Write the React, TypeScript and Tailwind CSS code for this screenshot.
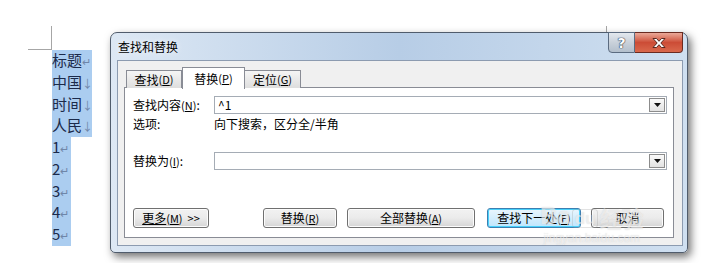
const CJK = "font-['Noto_Sans_CJK_SC','Liberation_Sans',sans-serif]";

const DOC_ROWS = [
  { text: "标题", mark: "↵", w: "w-[40px]" },
  { text: "中国", mark: "↓", w: "w-[40px]" },
  { text: "时间", mark: "↓", w: "w-[40px]" },
  { text: "人民", mark: "↓", w: "w-[40px]" },
  { text: "1", mark: "↵", w: "w-[19px]" },
  { text: "2", mark: "↵", w: "w-[19px]" },
  { text: "3", mark: "↵", w: "w-[19px]" },
  { text: "4", mark: "↵", w: "w-[19px]" },
  { text: "5", mark: "↵", w: "w-[19px]" },
];

function Key({ k }: { k: string }) {
  return (
    <span className="text-[11px]">
      (<span className="underline">{k}</span>)
    </span>
  );
}

function DropArrow() {
  return (
    <div className="w-[16px] h-[14px] border border-[#8c8c8c] bg-gradient-to-b from-[#fafafa] to-[#e2e2e2] flex items-center justify-center">
      <svg width="7" height="4" viewBox="0 0 7 4">
        <path d="M0 0h7L3.5 4z" fill="#111" />
      </svg>
    </div>
  );
}

function Btn({
  w,
  ml,
  primary,
  children,
}: {
  w: string;
  ml?: string;
  primary?: boolean;
  children: React.ReactNode;
}) {
  return (
    <div
      className={`${w} ${ml ?? ""} h-[20px] rounded-[3px] border flex items-center justify-center text-[12px] text-black ${
        primary
          ? "border-[#3c7fb1] bg-gradient-to-b from-[#eaf6fd] to-[#bee6fd] shadow-[inset_0_0_0_1px_#48d1fb]"
          : "border-[#707070] bg-gradient-to-b from-[#f2f2f2] via-[#ebebeb] to-[#d5d5d5] shadow-[inset_0_0_0_1px_#fcfcfc]"
      }`}
    >
      {children}
    </div>
  );
}

export default function App() {
  return (
    <div className={`relative w-[704px] h-[263px] bg-white overflow-hidden ${CJK}`}>
      {/* crop marks */}
      <div className="flex pt-[26px]">
        <div className="ml-[28px] w-[24px] h-[24px] border-r border-b border-[#a6a6a6]" />
        <div className="ml-[554px] w-px h-[24px] bg-[#a6a6a6]" />
      </div>

      {/* document text */}
      <div className="pl-[52px] text-[15px] leading-[20.75px] text-[#1b2a4a]">
        {DOC_ROWS.map((r, i) => (
          <div key={i} className={`${r.w} bg-[#abcdf0] whitespace-nowrap`}>
            {r.text}
            <span className="text-[11px] text-[#6f86a8]">{r.mark}</span>
          </div>
        ))}
      </div>

      {/* dialog window */}
      <div className="absolute left-[110px] top-[32px] w-[578px] h-[221px] rounded-t-[7px] rounded-b-[5px] border border-[#505c6c] bg-gradient-to-r from-[#dde8f4] via-[#b7cde6] to-[#cfdff0] shadow-[3px_4px_9px_rgba(0,0,0,0.55)] flex flex-col">
        <div className="h-[27px] flex justify-between">
          <div className="pl-[7px] pt-[5px] text-[12px] text-black [text-shadow:0_0_6px_#fff]">
            查找和替换
          </div>
          <div className="flex -mt-px mr-[4px] h-[21px]">
            <div className="w-[27px] border border-[#5b6b80] rounded-bl-[4px] bg-gradient-to-b from-[#e3e8ee] via-[#c9d1da] to-[#b3bfcc] flex items-center justify-center">
              <span className="text-[14px] font-bold leading-none text-white font-['DejaVu_Sans',sans-serif] [text-shadow:0_0_1px_#2b3a4e,0_0_1px_#2b3a4e,0_0_1px_#2b3a4e]">
                ?
              </span>
            </div>
            <div className="w-[48px] border border-l-0 border-[#6a2a20] rounded-br-[4px] bg-gradient-to-b from-[#e9a898] via-[#cc4c36] to-[#d9684c] flex items-center justify-center">
              <svg width="16" height="12" viewBox="0 0 16 12">
                <path
                  d="M2 1.5h3.5L8 4.3 10.5 1.5H14l-4.2 4.5L14 10.5h-3.5L8 7.7 5.5 10.5H2l4.2-4.5z"
                  fill="#fff"
                  stroke="#4a1c14"
                  strokeWidth="0.9"
                  strokeLinejoin="round"
                />
              </svg>
            </div>
          </div>
        </div>

        <div className="flex-1 ml-[6px] mr-[4px] mb-[6px] border border-[#8c9bb0] bg-[#f0f0f0] pl-[6px] pr-[8px] pt-[6px] pb-[7px] flex flex-col">
          {/* tabs */}
          <div className="flex items-end h-[21px] pl-[2px] -mb-px relative z-10 text-[12px] text-black">
            <div className="w-[56px] h-[18px] border border-b-0 border-[#898c95] bg-gradient-to-b from-[#f5f5f5] to-[#dedede] flex items-center justify-center">
              查找<Key k="D" />
            </div>
            <div className="w-[63px] h-[22px] border border-b-0 border-[#898c95] bg-white flex items-center justify-center -mb-px">
              替换<Key k="P" />
            </div>
            <div className="w-[56px] h-[18px] border border-b-0 border-l-0 border-[#898c95] bg-gradient-to-b from-[#f5f5f5] to-[#dedede] flex items-center justify-center">
              定位<Key k="G" />
            </div>
          </div>

          {/* panel */}
          <div className="flex-1 border border-[#898c95] bg-white pl-[8px] pr-[6px] pt-[8px] text-[12px] text-black flex flex-col">
            <div className="flex items-center">
              <div className="w-[81px] whitespace-nowrap">
                查找内容<Key k="N" />:
              </div>
              <div className="flex-1 h-[18px] border border-[#a5acb5] bg-white flex items-center justify-between pr-px">
                <span className="pl-[3px] text-[12px] leading-none">^1</span>
                <DropArrow />
              </div>
            </div>
            <div className="flex h-[14px] mt-[3px] leading-[14px]">
              <div className="w-[81px]">选项:</div>
              <div>向下搜索，区分全/半角</div>
            </div>
            <div className="flex items-center mt-[21px]">
              <div className="w-[81px] whitespace-nowrap">
                替换为<Key k="I" />:
              </div>
              <div className="flex-1 h-[18px] border border-[#a5acb5] bg-white flex items-center justify-end pr-px">
                <DropArrow />
              </div>
            </div>
            <div className="flex mt-[38px]">
              <Btn w="w-[76px]">
                <span className="underline">更多</span>
                <Key k="M" />
                <span className="ml-[5px] text-[11px]">&gt;&gt;</span>
              </Btn>
              <Btn w="w-[74px]" ml="ml-[54px]">
                替换<Key k="R" />
              </Btn>
              <Btn w="w-[128px]" ml="ml-[10px]">
                全部替换<Key k="A" />
              </Btn>
              <Btn w="w-[94px]" ml="ml-[12px]" primary>
                查找下一处<Key k="F" />
              </Btn>
              <Btn w="w-[73px]" ml="ml-[10px]">
                取消
              </Btn>
            </div>
          </div>
        </div>
      </div>

      {/* watermark */}
      <div className="absolute left-[540px] top-[204px] flex flex-col items-center text-white/55 [text-shadow:0_0_1px_rgba(140,140,140,0.35)] pointer-events-none">
        <div className="flex items-end gap-[1px] font-['Liberation_Sans',sans-serif] leading-none">
          <span className="text-[24px] font-bold">Ba</span>
          <span className="text-[17px] font-bold px-[2px] rounded-[3px] border border-[rgba(160,160,160,0.3)]">du</span>
          <span className={`text-[22px] font-bold ${CJK}`}>经验</span>
        </div>
        <div className="mt-[4px] text-[12px] leading-none font-['Liberation_Sans',sans-serif]">jingyan.baidu.com</div>
      </div>
    </div>
  );
}
